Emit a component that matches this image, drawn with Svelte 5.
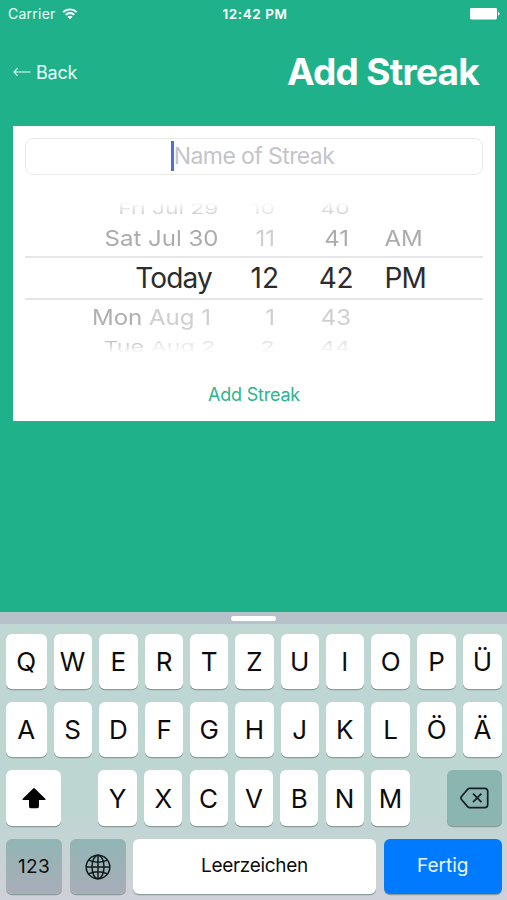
<script>
  const widths = [40.5, 38, 39.5, 38, 38, 38.5, 38, 38, 39.5, 38.5, 39];
  const keyRows = [[...'QWERTZUIOPÜ'], [...'ASDFGHJKLÖÄ']];
  const lower = [...'YXCVBNM'];
  const pickerRows = [
    { kind: 'far top', day: 'Fri', date: 'Jul 29', hour: '10', minute: '40', half: '' },
    { kind: 'near above', day: 'Sat', date: 'Jul 30', hour: '11', minute: '41', half: 'AM' },
    { kind: 'current', day: '', date: 'Today', hour: '12', minute: '42', half: 'PM' },
    { kind: 'near below', day: 'Mon', date: 'Aug 1', hour: '1', minute: '43', half: '' },
    { kind: 'far bottom', day: 'Tue', date: 'Aug 2', hour: '2', minute: '44', half: '' }
  ];
</script>

<div class="screen">
  <div class="status">
    <div class="carrier">
      <span>Carrier</span>
      <svg width="16" height="12" viewBox="0 0 16 12" fill="none" stroke="#fff" stroke-width="1.9">
        <path d="M1.2 4.2C5 .4 11 .4 14.8 4.2" />
        <path d="M3.7 6.8c2.4-2.4 6.2-2.4 8.6 0" />
        <path d="M5.5 8.7c1.4-1.3 3.6-1.3 5 0L8 11.3z" fill="#fff" stroke="none" />
      </svg>
    </div>
    <div class="time">12:42 PM</div>
    <div class="battery">
      <svg width="30" height="12" viewBox="0 0 30 12" fill="#fff">
        <rect x="0" y="0" width="27" height="11.5" rx="1.4" />
        <path d="M28 4c2 .4 2 3.200 0 3.600z" />
      </svg>
    </div>
  </div>

  <header>
    <button class="back">
      <svg width="18" height="10" viewBox="0 0 18 10" fill="none" stroke="#e4fff8" stroke-width="1.2">
        <path d="M17.500 5H1M4.700 1.200L1 5l3.700 3.800" />
      </svg>
      <span>Back</span>
    </button>
    <h1>Add Streak</h1>
  </header>

  <main>
    <div class="field"><i class="caret"></i><span>Name of Streak</span></div>
    <div class="picker">
      {#each pickerRows as row}
        <div class="row {row.kind}">
          <div class="date"><span>{#if row.day}<b>{row.day}</b>{' '}{/if}<em>{row.date}</em></span></div>
          <div class="hour"><span>{row.hour}</span></div>
          <div class="minute"><span>{row.minute}</span></div>
          <div class="half"><span>{row.half}</span></div>
        </div>
      {/each}
    </div>
    <button class="add">Add Streak</button>
  </main>

  <div class="keyboard">
    <div class="strip"><i></i></div>
    <div class="keys">
      {#each keyRows as letters}
        <div class="keyrow">
          {#each letters as letter, i}
            <div class="key" style="width: {widths[i]}px">{letter}</div>
          {/each}
        </div>
      {/each}
      <div class="keyrow">
        <div class="key side">
          <svg width="24" height="21" viewBox="0 0 24 21" fill="#000">
            <path d="M11.200.4q.8-.7 1.600 0L23.300 10.700q.9 1.300-.8 1.300H17v6.500q0 1.700-1.700 1.700H8.700Q7 20.200 7 18.500V12H1.500q-1.700 0-.8-1.300z" />
          </svg>
        </div>
        <div class="letters">
          {#each lower as letter, i}
            <div class="key" style="width: {widths[i + 2]}px">{letter}</div>
          {/each}
        </div>
        <div class="key side delete">
          <svg width="29" height="22" viewBox="0 0 29 22" fill="none" stroke="#15201f" stroke-width="1.700" stroke-linejoin="round">
            <path d="M9.500 1.300h15q3.200 0 3.200 3.200v13q0 3.200-3.200 3.200h-15q-1 0-1.700-.8L1.500 12.500q-1.200-1.500 0-3L7.800 2.100q.7-.8 1.700-.8z" />
            <path d="M13 6.600l8.400 8.600M21.400 6.600L13 15.200" />
          </svg>
        </div>
      </div>
      <div class="keyrow bottomrow">
        <div class="key grey num">123</div>
        <div class="key grey globe">
          <svg width="26" height="26" viewBox="0 0 26 26" fill="none" stroke="#101a1d" stroke-width="1.500">
            <circle cx="13" cy="13" r="11.800" />
            <ellipse cx="13" cy="13" rx="6" ry="11.800" />
            <path d="M13 1.200v23.600M1.200 13h23.600M3.700 6.200c5 2.600 13.600 2.600 18.600 0M3.700 19.800c5-2.600 13.600-2.600 18.600 0" />
          </svg>
        </div>
        <div class="key space">Leerzeichen</div>
        <div class="key done">Fertig</div>
      </div>
    </div>
  </div>
</div>

<style>
  :global(body) { margin: 0; }
  * { box-sizing: border-box; }
  .screen {
    width: 507px; height: 900px; overflow: hidden;
    display: flex; flex-direction: column;
    background: #1fb28a; color: #fff;
    font-family: Inter, "Liberation Sans", sans-serif;
  }
  button { border: 0; background: none; padding: 0; font: inherit; color: inherit; }
  .status {
    height: 28px; flex: none; padding: 0 7px 0 8px;
    display: grid; grid-template-columns: 1fr auto 1fr; align-items: center;
    font-size: 14px; line-height: 28px;
  }
  .carrier { display: flex; align-items: center; gap: 6px; color: #e9fff9; letter-spacing: .25px; }
  .time { font-weight: 600; font-size: 13.500px; letter-spacing: .6px; padding-left: 2px; }
  .battery { display: flex; justify-content: flex-end; }
  header {
    height: 97.500px; flex: none; padding: 0 28px 9px 13px;
    display: flex; align-items: center; justify-content: space-between;
  }
  .back { display: flex; align-items: center; gap: 5px; font-size: 18px; color: #e9fff9; letter-spacing: -.2px; }
  h1 { margin: 0; font-size: 37px; line-height: 44px; font-weight: 700; letter-spacing: -.75px; }
  main {
    flex: none; width: 482px; height: 295.500px; margin: 0 0 0 13px; padding: 12px 12px 0;
    background: #fff; display: flex; flex-direction: column; align-items: center;
  }
  .field {
    width: 458px; height: 37.500px; flex: none; border: 1px solid #e9e9e9; border-radius: 8px;
    display: flex; align-items: center; justify-content: center;
    font-size: 23px; color: #c4c4c9; letter-spacing: -.6px;
  }
  .field span { padding-right: 3px; }
  .caret { width: 3px; height: 30px; background: #4b72da; }
  .picker {
    width: 458px; height: 163px; margin-top: 22px; flex: none;
    display: flex; flex-direction: column; color: #b5b5b5;
  }
  .row {
    --d: 186px; --h: 64px; --m: 76px;
    flex: none; display: grid; grid-template-columns: var(--d) var(--h) var(--m) 1fr;
    align-items: center; white-space: nowrap; font-size: 24px; line-height: 24px;
  }
  .row span { display: inline-block; transform-origin: right center; }
  .row b, .row em { font-weight: 400; font-style: normal; }
  .date, .hour, .minute { text-align: right; }
  .half { padding-left: 35.500px; }
  .far { height: 22px; }
  .top { --d: 193.5px; --h: 56px; --m: 75px; }
  .above { --d: 193.500px; --h: 56.500px; --m: 74px; height: 37px; padding-top: 2px; }
  .bottom { --d: 190.500px; --h: 59.500px; --m: 75px; height: 26px; }
  .near span { transform: scaleY(.92); }
  .far span { transform: scale(.95, .63); }
  .top { color: #cdcdcd; -webkit-mask-image: linear-gradient(transparent 20%, #000 80%); mask-image: linear-gradient(transparent 20%, #000 80%); }
  .top .hour { color: #e2e2e2; }
  .above { color: #acacac; }
  .above .hour { color: #cfcfcf; }
  .below { height: 34px; padding-top: 2px; color: #cfcfcf; }
  .below b { color: #b0b0b0; }
  .bottom { color: #dedede; -webkit-mask-image: linear-gradient(#000 25%, transparent 75%); mask-image: linear-gradient(#000 25%, transparent 75%); }
  .bottom span { transform: scale(.97, .63); }
  .bottom b { color: #bebebe; }
  .current {
    --d: 187px; --h: 67px; --m: 74px;
    height: 44px; border-top: 2px solid #e6e6e6; border-bottom: 2px solid #e6e6e6;
    color: #2c2c2c; font-size: 28px; line-height: 28px; letter-spacing: -.5px;
  }
  .current .hour { letter-spacing: 0; }
  .current .half { padding-left: 31.500px; letter-spacing: -.8px; }
  .current .date { letter-spacing: -.8px; }
  .add { margin-top: 22.500px; line-height: 24px; font-size: 18px; color: #2cb48c; letter-spacing: -.2px; }
  .keyboard { height: 288px; flex: none; margin-top: auto; color: #0c0c0c; background: linear-gradient(#c0d7d4 0, #bdd6d2 68%, #ced1d7 98%); }
  .strip { height: 12px; background: #b7c1c9; display: flex; justify-content: center; padding-top: 3.500px; }
  .strip i { width: 45px; height: 5px; border-radius: 3px; background: #fff; }
  .keys { padding: 9.500px 5px 0 6px; display: flex; flex-direction: column; gap: 13.300px; }
  .keyrow { display: flex; justify-content: space-between; }
  .letters { width: 312.500px; display: flex; justify-content: space-between; }
  .key {
    height: 55.200px; flex: none; border-radius: 6px; background: #fff; box-shadow: 0 1.200px 0 #8b9c9c;
    display: flex; align-items: center; justify-content: center; font-size: 26px;
  }
  .side { width: 55px; }
  .delete { background: #8bb5b0; }
  .bottomrow .key { font-size: 19px; }
  .bottomrow .num { letter-spacing: .3px; }
  .grey { width: 56px; background: linear-gradient(#91b5b5, #a9adb8); }
  .bottomrow .space { width: 243px; padding-bottom: 3px; letter-spacing: -.3px; }
  .bottomrow .done { width: 118.500px; padding-bottom: 3px; background: #007aff; color: #e8f4ff; }
</style>
